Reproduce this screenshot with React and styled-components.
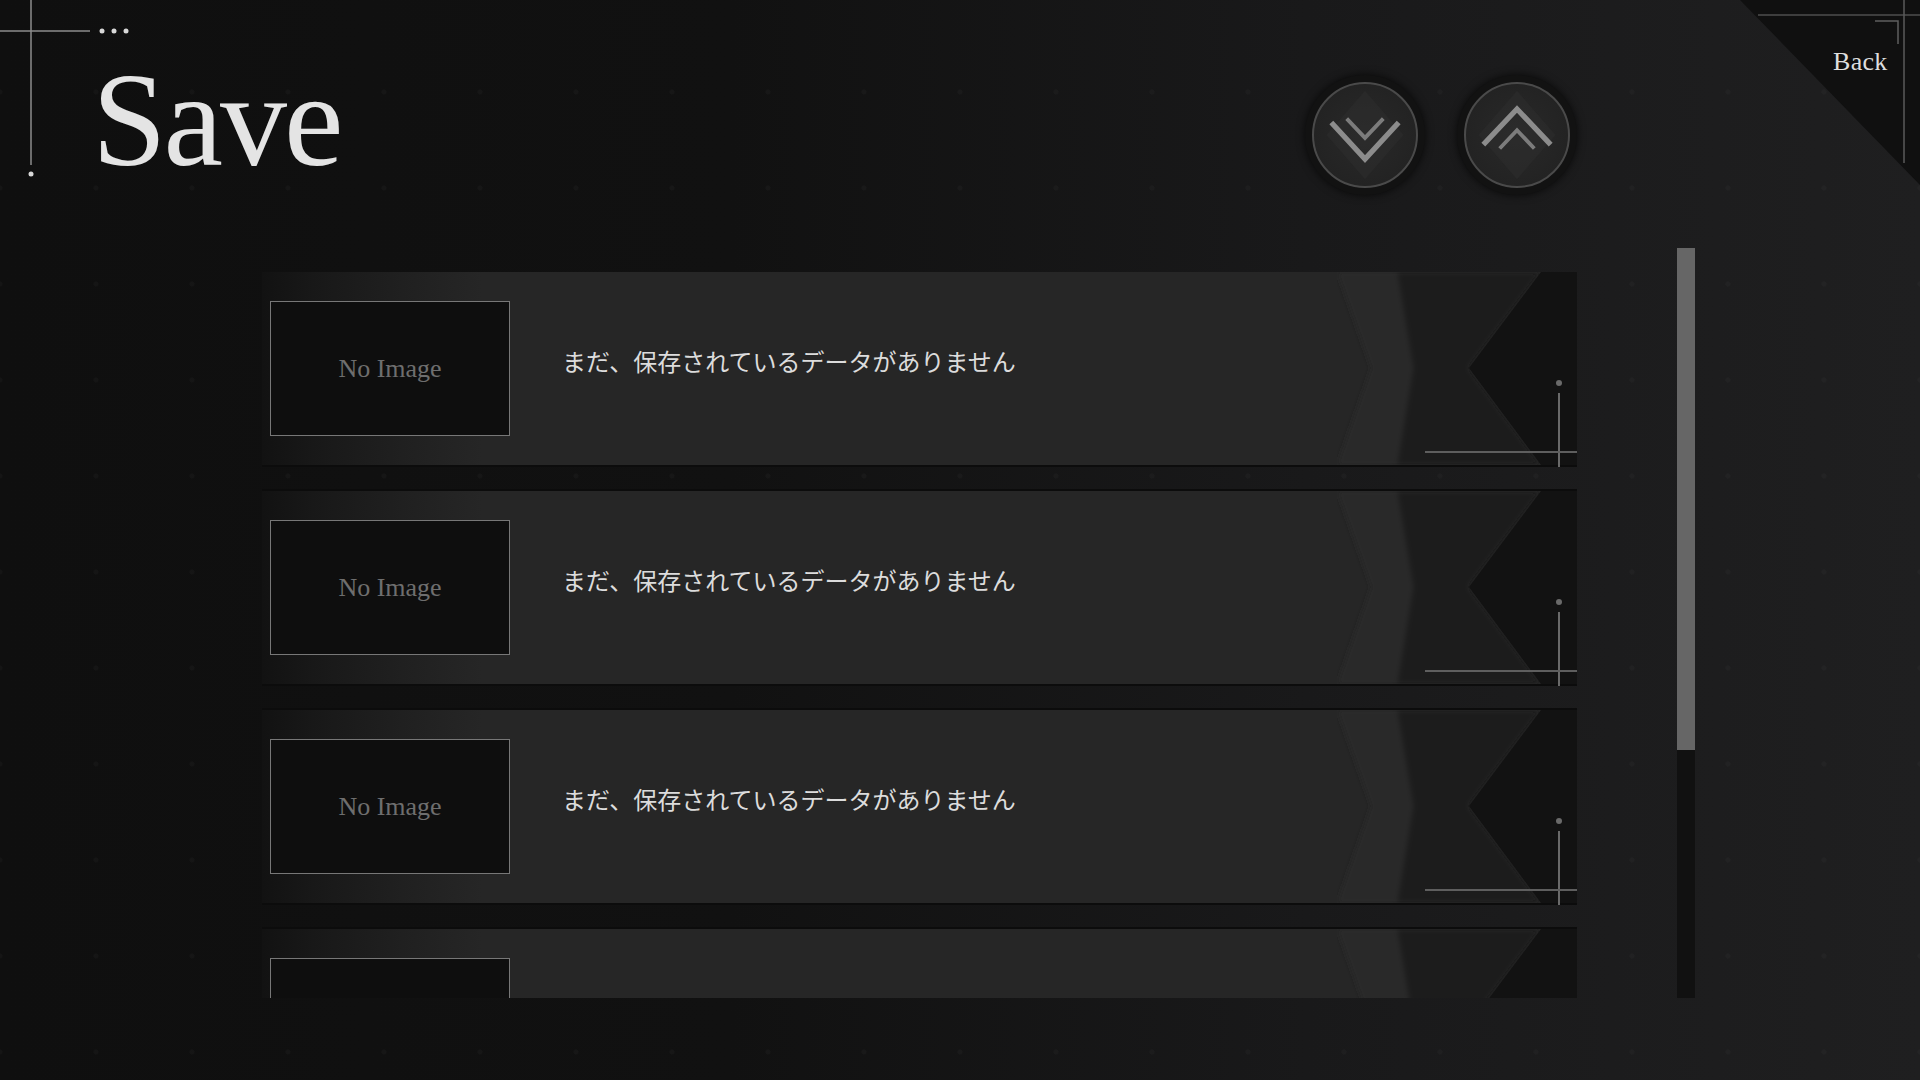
import styled, { createGlobalStyle } from 'styled-components';

const GlobalStyle = createGlobalStyle`
  html, body {
    margin: 0;
    padding: 0;
    background: #101010;
  }
  * {
    box-sizing: border-box;
  }
`;

const slots = [1, 2, 3, 4];

const ChevronDown = () => (
  <svg width="106" height="106" viewBox="7 7 106 106">
    <polygon points="60,14 100,60 60,106 20,60" fill="#2d2d2d" opacity="0.5" />
    <polyline points="25,47 60,85 95,47" fill="none" stroke="#8c8c8c" strokeWidth="5.5" />
    <polyline points="41,43 60,63 79,43" fill="none" stroke="#7c7c7c" strokeWidth="4" />
  </svg>
);

const ChevronUp = () => (
  <svg width="106" height="106" viewBox="7 7 106 106">
    <polygon points="60,14 100,60 60,106 20,60" fill="#2d2d2d" opacity="0.5" />
    <polyline points="25,70 60,33 95,70" fill="none" stroke="#8c8c8c" strokeWidth="5.5" />
    <polyline points="42,74 60,55 78,74" fill="none" stroke="#7c7c7c" strokeWidth="4" />
  </svg>
);

export default function App() {
  return (
    <>
      <GlobalStyle />
      <Page>
        <CornerMarks width="140" height="180">
          <line x1="31" y1="0" x2="31" y2="165" stroke="#8c8c8c" strokeWidth="1.5" />
          <line x1="0" y1="31" x2="90" y2="31" stroke="#8c8c8c" strokeWidth="1.5" />
          <circle cx="31" cy="174" r="2.5" fill="#d8d8d8" />
          <circle cx="102" cy="31" r="2.5" fill="#d8d8d8" />
          <circle cx="114" cy="31" r="2.5" fill="#d8d8d8" />
          <circle cx="126" cy="31" r="2.5" fill="#d8d8d8" />
        </CornerMarks>

        <BackCorner>
          <svg width="180" height="190" viewBox="0 0 180 190">
            <polygon points="0,0 180,0 180,185" fill="#101010" />
            <line x1="18" y1="15" x2="180" y2="15" stroke="#3e3e3e" strokeWidth="2" />
            <line x1="164" y1="0" x2="164" y2="163" stroke="#5a5a5a" strokeWidth="1.5" />
            <polyline points="135,21 158,21 158,44" fill="none" stroke="#5e5e5e" strokeWidth="1.5" />
          </svg>
          <BackLabel>Back</BackLabel>
        </BackCorner>

        <Header>
          <Title>Save</Title>
          <PageButtons>
            <RoundButton aria-label="down">
              <ButtonFace>
                <ChevronDown />
              </ButtonFace>
            </RoundButton>
            <RoundButton aria-label="up">
              <ButtonFace>
                <ChevronUp />
              </ButtonFace>
            </RoundButton>
          </PageButtons>
        </Header>

        <Main>
          <SlotList>
            {slots.map((n) => (
              <Slot key={n}>
                <SlotShade viewBox="0 0 240 193" preserveAspectRatio="none">
                  <defs>
                    <filter id={`soft${n}`} x="-10%" y="-10%" width="120%" height="120%">
                      <feGaussianBlur stdDeviation="2.5" />
                    </filter>
                  </defs>
                  <g filter={`url(#soft${n})`}>
                    <polygon points="0,0 60,0 76,96 60,193 0,193 34,96" fill="#2c2c2c" opacity="0.45" />
                    <polygon points="60,0 204,0 132,96 204,193 60,193 76,96" fill="#1f1f1f" />
                    <polygon points="150,0 204,0 132,96 204,193 150,193 112,96" fill="#1a1a1a" opacity="0.8" />
                  </g>
                  <polygon points="204,0 240,0 240,193 204,193 132,96" fill="#121212" />
                </SlotShade>
                <Thumb>No Image</Thumb>
                <SlotText>まだ、保存されているデータがありません</SlotText>
                <SlotMarks width="152" height="90" viewBox="0 0 152 90">
                  <circle cx="134" cy="6" r="3" fill="#6a6a6a" />
                  <line x1="134" y1="16" x2="134" y2="90" stroke="#6a6a6a" strokeWidth="2" />
                  <line x1="0" y1="75" x2="152" y2="75" stroke="#5e5e5e" strokeWidth="2" />
                </SlotMarks>
              </Slot>
            ))}
          </SlotList>
          <ScrollTrack>
            <ScrollThumb />
          </ScrollTrack>
        </Main>
      </Page>
    </>
  );
}

const Page = styled.div`
  position: relative;
  width: 1920px;
  height: 1080px;
  overflow: hidden;
  background-color: #101010;
  background-image:
    radial-gradient(circle, rgba(255, 255, 255, 0.025) 2px, transparent 3px),
    linear-gradient(90deg, #0f0f0f 0%, #111111 38%, #19191a 68%, #1f1f20 100%);
  background-size: 96px 96px, 100% 100%;
  background-position: 48px 44px, 0 0;
  font-family: 'Liberation Serif', 'Noto Sans CJK JP', serif;
`;

const CornerMarks = styled.svg`
  position: absolute;
  left: 0;
  top: 0;
`;

const BackCorner = styled.div`
  position: absolute;
  top: 0;
  right: 0;
  width: 180px;
  height: 190px;

  svg {
    display: block;
  }
`;

const BackLabel = styled.span`
  position: absolute;
  left: 93px;
  top: 49px;
  font-family: 'Liberation Serif', serif;
  font-size: 26px;
  line-height: 1;
  color: #dedede;
  letter-spacing: 0.3px;
`;

const Header = styled.header`
  display: flex;
  align-items: flex-start;
  height: 248px;
  padding-right: 343px;
`;

const Title = styled.h1`
  margin: 53px 0 0 92px;
  font-family: 'Liberation Serif', serif;
  font-weight: 400;
  font-size: 134px;
  line-height: 1;
  letter-spacing: -3px;
  color: #e4e4e4;
`;

const PageButtons = styled.div`
  display: flex;
  gap: 32px;
  margin: 75px 0 0 auto;
`;

const RoundButton = styled.button`
  width: 120px;
  height: 120px;
  padding: 7px;
  border: none;
  border-radius: 50%;
  background: #121212;
  box-shadow: 0 0 8px rgba(0, 0, 0, 0.7);
  cursor: pointer;
`;

const ButtonFace = styled.div`
  width: 100%;
  height: 100%;
  border-radius: 50%;
  border: 2px solid #4a4a4a;
  background: radial-gradient(circle at 50% 50%, #292929 0%, #232323 70%, #1d1d1d 100%);
  display: flex;
  align-items: center;
  justify-content: center;
  overflow: hidden;

  svg {
    display: block;
  }
`;

const Main = styled.main`
  display: flex;
  align-items: flex-start;
  padding-left: 262px;
`;

const SlotList = styled.div`
  width: 1315px;
  height: 726px;
  margin-top: 24px;
  overflow: hidden;
  display: flex;
  flex-direction: column;
  gap: 26px;
`;

const Slot = styled.div`
  position: relative;
  flex: 0 0 193px;
  height: 193px;
  display: flex;
  align-items: center;
  background: linear-gradient(90deg, #121212 0px, #181818 50px, #202020 140px, #262626 220px, #262626 100%);
  box-shadow: 0 2px 0 #0c0c0c, 0 -2px 0 #0c0c0c;
`;

const SlotShade = styled.svg`
  position: absolute;
  top: 0;
  right: 0;
  width: 240px;
  height: 100%;
`;

const Thumb = styled.div`
  position: relative;
  flex: 0 0 240px;
  height: 135px;
  margin-left: 8px;
  display: flex;
  align-items: center;
  justify-content: center;
  background: #0e0e0e;
  border: 1.5px solid #777777;
  font-family: 'Liberation Serif', serif;
  font-size: 26px;
  color: #6e6e6e;
`;

const SlotText = styled.p`
  position: relative;
  margin: 0 0 16px 52px;
  font-family: 'Noto Sans CJK JP', 'Noto Sans', sans-serif;
  font-size: 24px;
  color: #dcdcdc;
`;

const SlotMarks = styled.svg`
  position: absolute;
  right: 0;
  bottom: -2px;
`;

const ScrollTrack = styled.div`
  width: 18px;
  height: 750px;
  margin-left: 100px;
  background: #111111;
`;

const ScrollThumb = styled.div`
  height: 502px;
  background: #666666;
`;
